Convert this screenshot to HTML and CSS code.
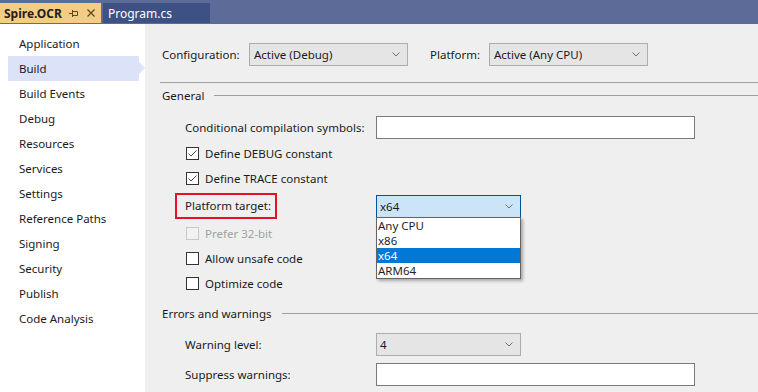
FILE: index.html
```html
<!DOCTYPE html>
<html>
<head>
<meta charset="utf-8">
<link rel="stylesheet" href="styles.css">
</head>
<body>
<div class="tabbar">
  <div class="tab tab-active">
    <span class="tab-title">Spire.OCR</span>
    <svg class="pin" width="9" height="7" viewBox="0 0 9 7"><path d="M0 3.5H3M3.5 0V7M3.5 1.5H8.5V5.5H3.5" fill="none" stroke="#5a4a22" stroke-width="1"/></svg>
    <svg class="close" width="8" height="8" viewBox="0 0 8 8"><path d="M0.5 0.5L7.5 7.5M7.5 0.5L0.5 7.5" fill="none" stroke="#5a4a22" stroke-width="1.3"/></svg>
  </div>
  <div class="tab tab-doc">Program.cs</div>
</div>
<div class="page">
  <nav class="sidebar">
    <div class="nav-item">Application</div>
    <div class="nav-item selected">Build</div>
    <div class="nav-item">Build Events</div>
    <div class="nav-item">Debug</div>
    <div class="nav-item">Resources</div>
    <div class="nav-item">Services</div>
    <div class="nav-item">Settings</div>
    <div class="nav-item">Reference Paths</div>
    <div class="nav-item">Signing</div>
    <div class="nav-item">Security</div>
    <div class="nav-item">Publish</div>
    <div class="nav-item">Code Analysis</div>
  </nav>
  <main class="main">
    <div class="config-row">
      <span class="config-label">Configuration:</span>
      <div class="select"><span>Active (Debug)</span><svg class="chev" width="8" height="5" viewBox="0 0 8 5"><path d="M0.5 0.5L4 4L7.5 0.5" fill="none" stroke="#707070"/></svg></div>
      <span class="platform-label">Platform:</span>
      <div class="select"><span>Active (Any CPU)</span><svg class="chev" width="8" height="5" viewBox="0 0 8 5"><path d="M0.5 0.5L4 4L7.5 0.5" fill="none" stroke="#707070"/></svg></div>
    </div>
    <div class="rule"></div>
    <div class="group-head head-general"><span>General</span><span class="group-line"></span></div>

    <div class="form-row row-cond">
      <div class="lbl">Conditional compilation symbols:</div>
      <div class="textbox"></div>
    </div>
    <div class="form-row check-row row-first">
      <span class="cb"><svg width="11" height="11" viewBox="0 0 11 11"><path d="M1.5 5.5L4 8L9.5 2.5" fill="none" stroke="#4a4a4a" stroke-width="1"/></svg></span>
      <span>Define DEBUG constant</span>
    </div>
    <div class="form-row check-row">
      <span class="cb"><svg width="11" height="11" viewBox="0 0 11 11"><path d="M1.5 5.5L4 8L9.5 2.5" fill="none" stroke="#4a4a4a" stroke-width="1"/></svg></span>
      <span>Define TRACE constant</span>
    </div>
    <div class="form-row row-platform">
      <div class="lbl"><span class="red-box">Platform target:</span></div>
      <div class="select select-narrow select-focus">
        <span>x64</span><svg class="chev" width="8" height="5" viewBox="0 0 8 5"><path d="M0.5 0.5L4 4L7.5 0.5" fill="none" stroke="#707070"/></svg>
        <ul class="dropdown">
          <li>Any CPU</li>
          <li>x86</li>
          <li class="sel">x64</li>
          <li>ARM64</li>
        </ul>
      </div>
    </div>
    <div class="form-row check-row row-prefer disabled">
      <span class="cb"></span>
      <span>Prefer 32-bit</span>
    </div>
    <div class="form-row check-row">
      <span class="cb"></span>
      <span>Allow unsafe code</span>
    </div>
    <div class="form-row check-row">
      <span class="cb"></span>
      <span>Optimize code</span>
    </div>

    <div class="group-head head-errors"><span>Errors and warnings</span><span class="group-line"></span></div>
    <div class="form-row row-warn">
      <div class="lbl">Warning level:</div>
      <div class="select select-narrow"><span>4</span><svg class="chev" width="8" height="5" viewBox="0 0 8 5"><path d="M0.5 0.5L4 4L7.5 0.5" fill="none" stroke="#707070"/></svg></div>
    </div>
    <div class="form-row row-suppress">
      <div class="lbl">Suppress warnings:</div>
      <div class="textbox"></div>
    </div>
  </main>
</div>
</body>
</html>
```
FILE: styles.css
```css
html, body {
  margin: 0;
  padding: 0;
}
body {
  width: 758px;
  height: 392px;
  overflow: hidden;
  font-family: "Noto Sans", "Open Sans", sans-serif;
  font-size: 11.5px;
  color: #1a1a1a;
  background: #efefef;
}

/* tab bar */
.tabbar {
  height: 24px;
  box-sizing: border-box;
  padding: 3px 0 1px 0;
  background: #5d6b99;
  display: flex;
  gap: 2px;
}
.tab {
  height: 20px;
  display: flex;
  align-items: center;
  box-sizing: border-box;
  font-size: 12px;
}
.tab-active {
  width: 101px;
  background: #f5cc84;
  padding-left: 4px;
  font-weight: bold;
  color: #1e1e1e;
}
.tab-title {
  width: 64px;
  flex: none;
  white-space: nowrap;
}
.pin {
  margin-left: 1px;
  flex: none;
}
.close {
  margin-left: 9px;
  flex: none;
}
.tab-doc {
  width: 107px;
  background: #3d5185;
  color: #ffffff;
  padding-left: 5px;
}

/* page */
.page {
  display: flex;
  height: 368px;
}
.sidebar {
  width: 145px;
  flex: none;
  background: #ffffff;
  padding-top: 7px;
  box-sizing: border-box;
}
.nav-item {
  position: relative;
  height: 25px;
  line-height: 25px;
  margin-left: 8px;
  width: 131px;
  padding-left: 11px;
  box-sizing: border-box;
  white-space: nowrap;
}
.nav-item.selected {
  background: #dce2f7;
}
.nav-item.selected::after {
  content: "";
  position: absolute;
  right: -6px;
  top: 6px;
  border-top: 6.5px solid transparent;
  border-bottom: 6.5px solid transparent;
  border-left: 6px solid #dce2f7;
}

.main {
  flex: 1;
  background: #efefef;
  padding: 19px 0 0 15px;
  overflow: hidden;
}

.config-row {
  display: flex;
  align-items: center;
  height: 23px;
  padding-left: 2px;
}
.config-label {
  width: 87px;
  flex: none;
}
.platform-label {
  margin-left: 22px;
  width: 59px;
  flex: none;
}
.select {
  position: relative;
  width: 159px;
  height: 23px;
  flex: none;
  box-sizing: border-box;
  background: #e5e5e5;
  border: 1px solid #adadad;
  display: flex;
  align-items: center;
  justify-content: space-between;
  padding: 0 7px 0 4px;
}
.select-narrow {
  width: 145px;
  padding-left: 3px;
}
.select-focus {
  background: #cce4f7;
  border-color: #005499;
}
.chev {
  flex: none;
}

.rule {
  height: 1px;
  background: #a0a0a0;
  margin-top: 16px;
}
.group-head {
  display: flex;
  align-items: center;
  height: 14px;
  padding-left: 2px;
}
.head-general {
  margin-top: 5px;
}
.head-errors {
  margin-top: 10px;
}
.group-line {
  flex: 1;
  height: 1px;
  background: #a0a0a0;
  margin-left: 10px;
}

.form-row {
  display: flex;
  align-items: center;
  padding-left: 25px;
}
.lbl {
  width: 191px;
  flex: none;
  white-space: nowrap;
}
.textbox {
  width: 319px;
  height: 23px;
  box-sizing: border-box;
  background: #ffffff;
  border: 1px solid #7a7a7a;
  flex: none;
}
.row-cond {
  margin-top: 14px;
}
.check-row {
  height: 25px;
}
.row-first {
  margin-top: 2px;
}
.row-platform {
  height: 25px;
  margin-top: 3px;
}
.row-prefer {
  margin-top: 2px;
}
.row-warn {
  margin-top: 13px;
}
.row-suppress {
  margin-top: 7px;
}

.cb {
  width: 13px;
  height: 13px;
  flex: none;
  box-sizing: border-box;
  border: 1px solid #333333;
  background: #ffffff;
  margin-left: 1px;
  margin-right: 6px;
  display: flex;
}
.disabled {
  color: #a2a2a2;
}
.disabled .cb {
  border-color: #c8c8c8;
  background: #f2f2f2;
}

.red-box {
  display: inline-flex;
  align-items: center;
  box-sizing: border-box;
  width: 102px;
  height: 26px;
  margin-left: -10px;
  margin-top: -2px;
  padding-left: 8px;
  border: 2px solid #e81123;
  vertical-align: middle;
}

.dropdown {
  position: absolute;
  top: 100%;
  left: -1px;
  width: 145px;
  box-sizing: border-box;
  margin: 0;
  padding: 0;
  list-style: none;
  background: #ffffff;
  border: 1px solid #646464;
  box-shadow: 2px 2px 3px rgba(0, 0, 0, 0.3);
  z-index: 5;
}
.dropdown li {
  height: 15px;
  line-height: 15px;
  padding-left: 1px;
  color: #1e1e1e;
}
.dropdown li.sel {
  background: #0078d7;
  color: #ffffff;
}
```
